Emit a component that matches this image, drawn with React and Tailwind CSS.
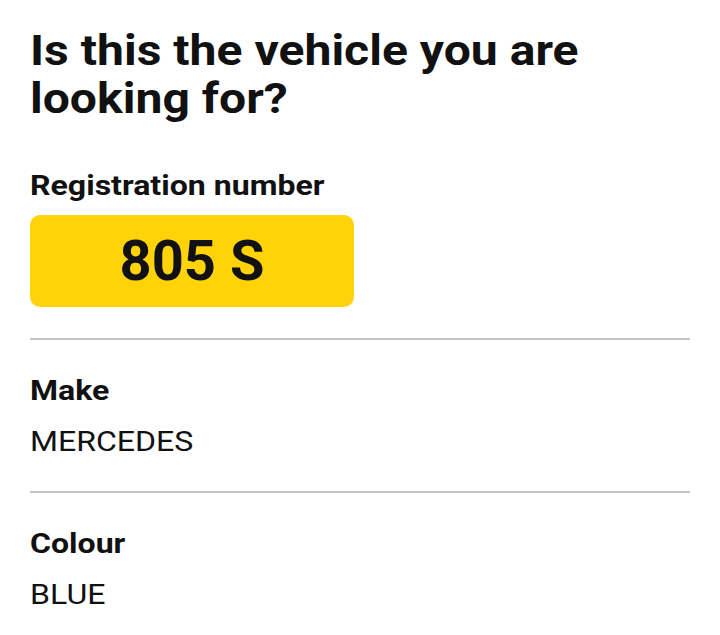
export default function App() {
  const font = { fontFamily: "Roboto, 'Noto Sans', sans-serif" };
  return (
    <div className="w-[720px] h-[635px] bg-white text-[#111111] overflow-hidden" style={font}>
      <div className="px-[30px] pt-[27px]">
        <h1 className="w-[576px] origin-left scale-x-[1.145] text-[42px] leading-[48px] font-bold m-0">
          Is this the vehicle you are looking for?
        </h1>
        <div className="mt-[47px] text-[28px] leading-[32px] font-bold">
          <span className="inline-block origin-left scale-x-[1.145]">Registration number</span>
        </div>
        <div className="mt-[13px] w-[324px] h-[92px] rounded-[10px] bg-[#FFD307] flex items-center justify-center">
          <span className="text-[56px] leading-none font-bold text-[#111111]">805 S</span>
        </div>
        <div className="mt-[31px] h-[2px] bg-[#c4c4c4]" />
        <div className="pt-[35px] pb-[33px]">
          <div className="text-[28px] leading-[32px] font-bold">
            <span className="inline-block origin-left scale-x-[1.145]">Make</span>
          </div>
          <div className="mt-[19px] text-[28px] leading-[32px] font-normal">
            <span className="inline-block origin-left scale-x-[1.145]">MERCEDES</span>
          </div>
        </div>
        <div className="h-[2px] bg-[#c4c4c4]" />
        <div className="pt-[35px]">
          <div className="text-[28px] leading-[32px] font-bold">
            <span className="inline-block origin-left scale-x-[1.145]">Colour</span>
          </div>
          <div className="mt-[19px] text-[28px] leading-[32px] font-normal">
            <span className="inline-block origin-left scale-x-[1.145]">BLUE</span>
          </div>
        </div>
      </div>
    </div>
  );
}
